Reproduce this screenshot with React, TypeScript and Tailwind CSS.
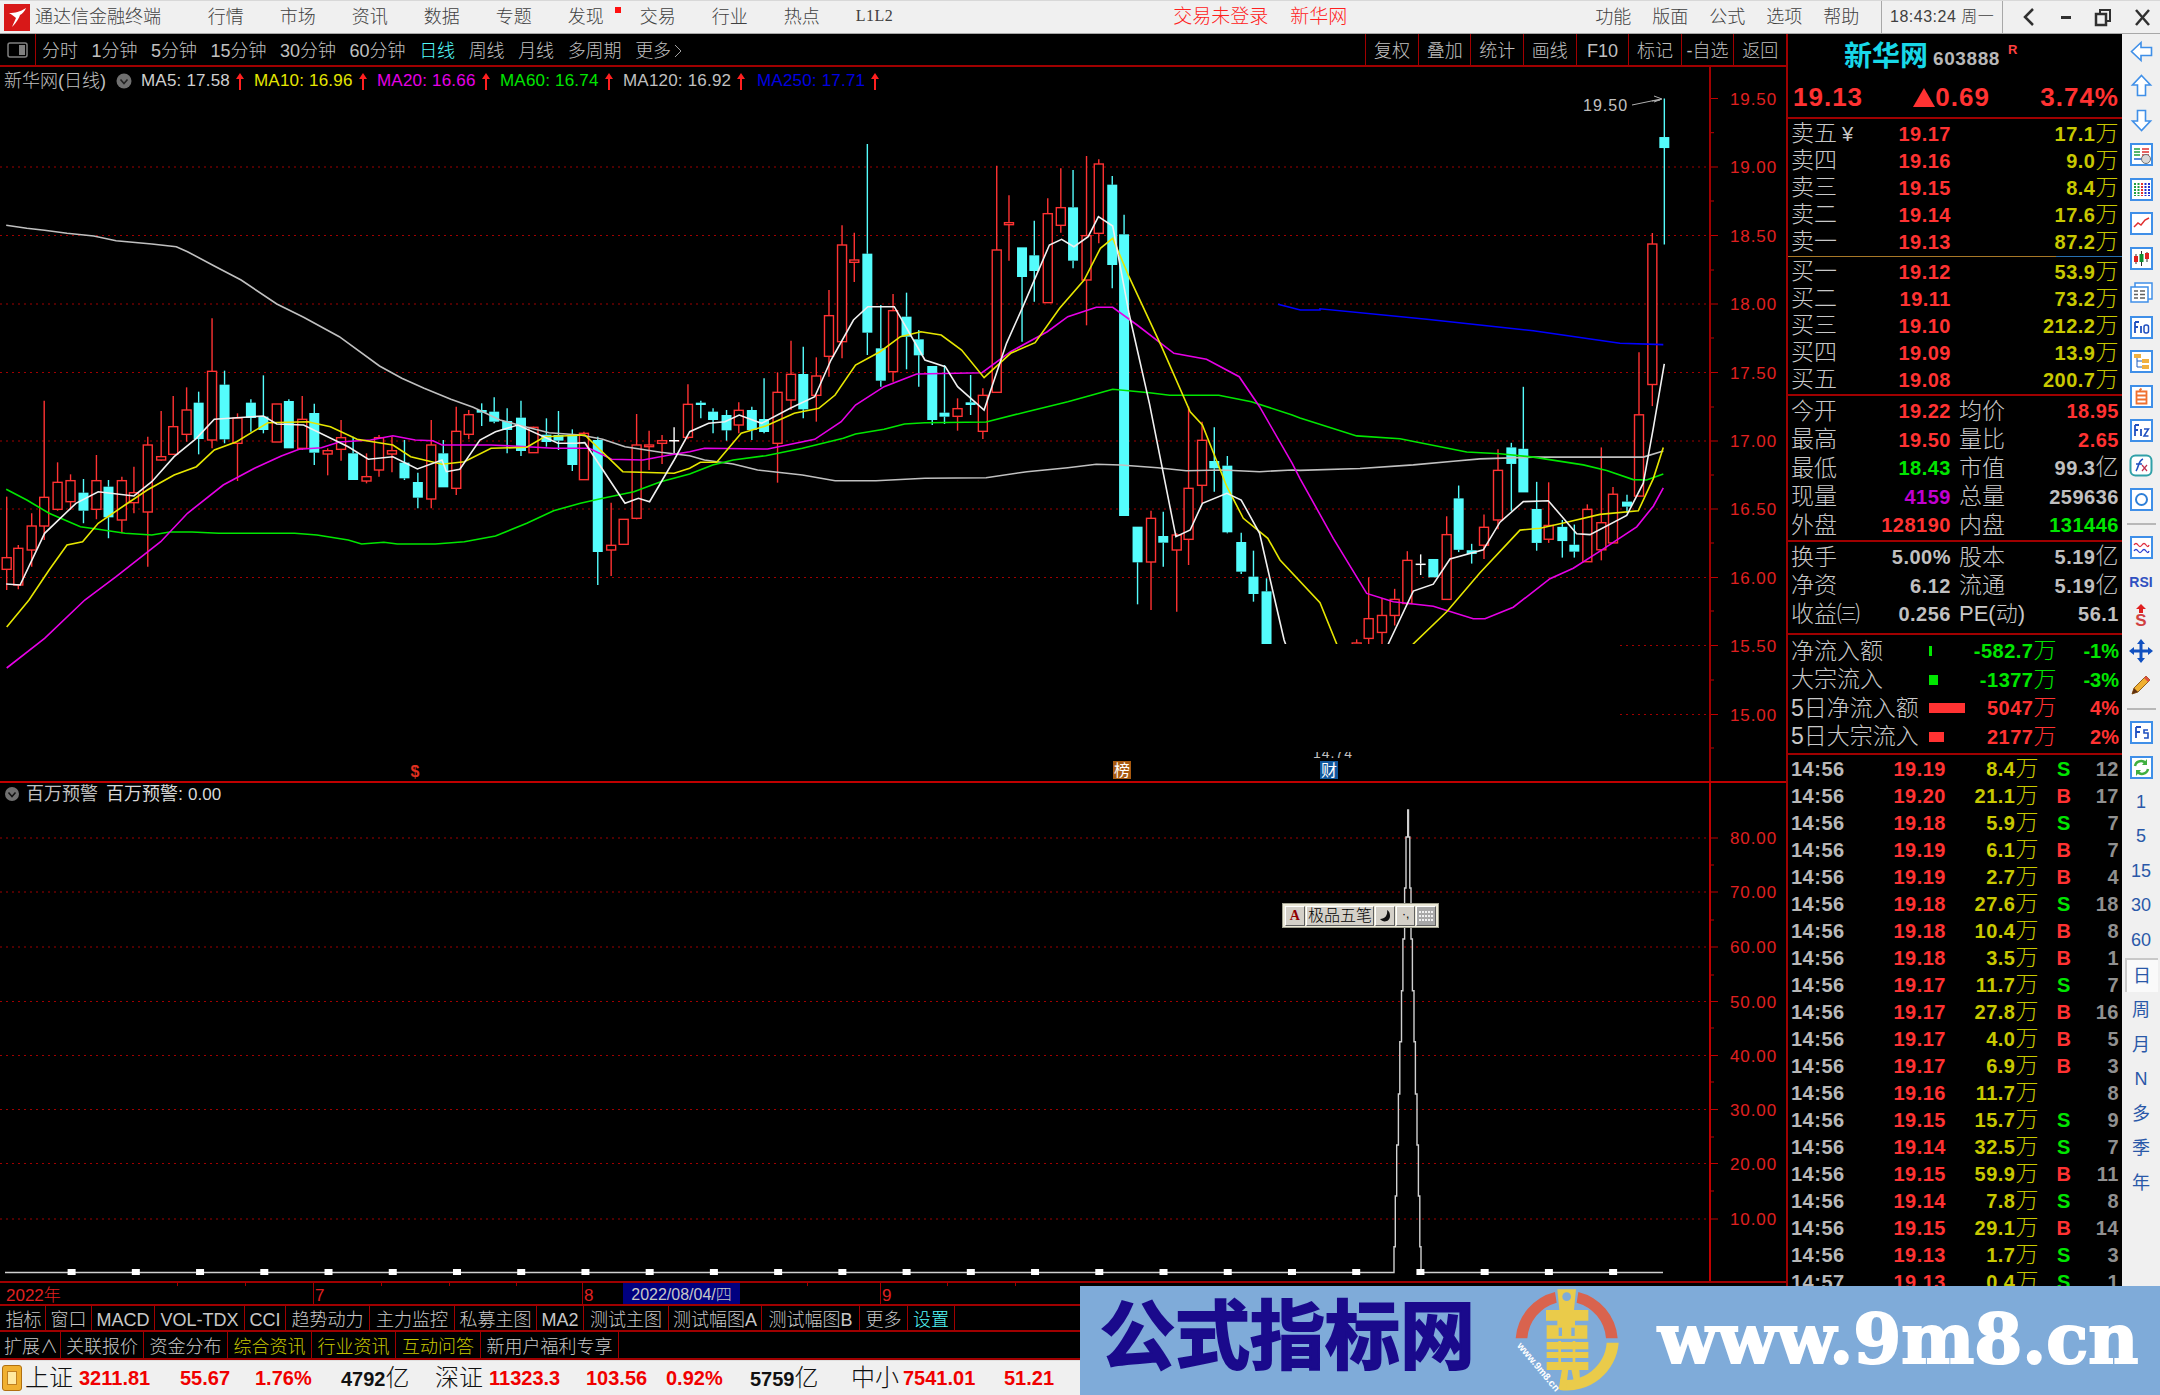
import React from "react";

type C = [number, "r" | "c" | "w", number, number, number, number];
type P = [number, number];
const z8 = (p: P): P => [p[0] / 2.24, 120 + p[1] / 3];
const z9 = (p: P): P => [680 + p[0] / 2.45, 120 + p[1] / 3];
const z10 = (p: P): P => [1300 + p[0] / 3, 70 + p[1] / 2.178];

const c8: C[] = [
  [15,"r",1130,1313,1348,1410],[41,"r",1275,1285,1395,1408],[71,"r",1180,1218,1290,1340],[99,"r",842,1132,1218,1260],
  [129,"r",1027,1087,1168,1172],[158,"r",1063,1082,1145,1170],[187,"c",1077,1118,1172,1210],[216,"r",1005,1082,1168,1198],
  [243,"c",1080,1100,1192,1255],[273,"r",1070,1082,1200,1240],[300,"r",1040,1118,1148,1180],[331,"r",950,975,1176,1340],
  [361,"r",873,1010,1020,1022],[388,"r",828,920,1003,1005],[418,"r",802,870,943,965],[445,"c",815,848,957,1003],
  [475,"r",595,754,960,985],[503,"c",752,794,958,970],[532,"r",880,894,970,1083],[562,"c",838,848,894,935],
  [590,"c",766,890,930,940],[620,"r",852,852,966,966],[647,"c",838,843,985,985],[677,"r",828,898,985,990],
  [704,"c",851,879,998,1035],[734,"r",985,992,1002,1066],[764,"r",900,953,988,1022],[791,"c",950,1000,1080,1080],
  [821,"r",1000,1070,1083,1090],[849,"r",945,953,1050,1070],[878,"r",950,992,1002,1057],[906,"c",960,1028,1075,1080],
  [936,"c",1058,1086,1133,1165],[966,"r",900,975,1137,1165],[993,"c",960,1000,1102,1102],[1022,"r",860,934,1105,1125],
  [1050,"r",870,884,943,958],[1079,"c",850,870,878,918],[1107,"c",832,875,905,910],[1136,"c",865,903,930,1000],
  [1167,"c",842,893,993,1008],[1195,"r",920,922,998,998],[1224,"c",895,944,966,980],[1251,"c",873,945,962,990],
  [1282,"c",928,944,1035,1053],[1308,"r",935,940,1079,1079],[1339,"c",950,960,1296,1395],[1369,"r",1148,1276,1290,1368],
  [1397,"r",1198,1198,1273,1273],[1426,"r",882,975,1195,1198],[1454,"r",932,975,980,1050],[1483,"r",945,962,970,1032],
  [1510,"w",922,960,962,1000],[1541,"r",793,853,952,958],
];
const c9: C[] = [
  [51,"c",842,848,855,895],[81,"c",865,875,900,940],[114,"c",870,885,931,962],[144,"r",847,871,915,940],
  [176,"c",860,870,930,960],[206,"c",775,897,936,940],[239,"r",757,817,970,1088],[272,"r",662,763,840,870],
  [302,"c",680,762,868,895],[334,"r",712,768,826,905],[365,"r",510,587,709,770],[397,"r",316,375,665,715],
  [427,"r",338,420,427,486],[459,"c",72,401,638,705],[492,"c",555,685,782,800],[522,"r",522,572,755,785],
  [555,"c",518,590,650,748],[585,"c",630,658,706,800],[618,"c",738,738,900,915],[648,"c",735,878,890,912],
  [680,"r",835,866,889,932],[712,"c",765,847,855,885],[742,"r",805,826,934,957],[776,"r",137,390,817,817],
  [806,"r",226,308,314,422],[838,"c",382,382,471,665],[868,"c",302,406,453,545],[901,"r",235,281,548,548],
  [933,"r",145,263,316,338],[963,"c",150,262,422,445],[996,"r",108,347,480,616],[1026,"r",118,132,340,370],
  [1059,"c",168,194,435,505],[1088,"c",284,343,1188,1188],[1121,"c",1220,1220,1327,1453],[1154,"r",1172,1195,1326,1470],
  [1184,"c",1175,1248,1268,1340],[1217,"r",1240,1245,1290,1475],[1246,"r",860,1105,1258,1335],[1279,"r",905,961,1096,1150],
  [1309,"c",922,1023,1045,1115],[1341,"c",1008,1037,1237,1240],[1375,"c",1238,1266,1355,1362],[1405,"c",1292,1370,1422,1445],
  [1437,"c",1375,1414,1700,1700],
];
const c10: C[] = [
  [170,"r",1240,1248,1300,1300],[206,"r",1105,1195,1238,1300],[246,"r",1150,1188,1225,1300],[284,"r",1130,1153,1188,1210],
  [322,"r",1048,1068,1162,1162],[362,"w",1055,1075,1078,1100],[400,"c",1065,1065,1105,1105],[440,"r",972,1012,1153,1153],
  [476,"c",905,933,1045,1050],[515,"c",1032,1046,1054,1075],[552,"r",968,996,1035,1065],[594,"r",826,872,980,1000],
  [634,"c",812,822,858,960],[670,"c",690,825,920,920],[710,"c",897,956,1030,1047],[746,"r",898,992,1022,1030],
  [787,"c",980,995,1026,1062],[823,"c",990,1034,1049,1062],[862,"r",946,957,1071,1071],[904,"r",822,986,1045,1068],
  [939,"r",908,924,1030,1030],[981,"c",925,940,951,965],[1017,"r",615,751,928,928],[1057,"r",355,379,685,732],
  [1093,"c",62,146,170,380],
];

const stitch = (a: P[], b: P[], c: P[]) => [
  ...a.map(z8).filter((p) => p[0] < 690),
  ...b.map(z9).filter((p) => p[0] >= 690 && p[0] < 1300),
  ...c.map(z10).filter((p) => p[0] >= 1300),
].map((p) => p[0].toFixed(1) + "," + p[1].toFixed(1)).join(" ");

const ma120 = stitch(
  [[14,316],[60,325],[100,331],[150,340],[210,348],[260,362],[340,372],[395,380],[420,395],[480,438],[540,480],[620,552],[680,592],[760,650],[850,738],[900,775],[950,805],[1010,838],[1060,862],[1120,900],[1170,918],[1230,938],[1300,945],[1350,958],[1400,980],[1480,997],[1545,1007]],
  [[60,1020],[130,1032],[190,1050],[300,1065],[380,1082],[480,1082],[600,1075],[750,1073],[850,1055],[950,1043],[1020,1033],[1080,1035],[1170,1043],[1240,1052],[1330,1050],[1420,1055],[1500,1050],[1568,1047]],
  [[0,872],[180,868],[340,860],[460,852],[540,847],[700,843],[1030,843],[1090,830]]
);
const ma60 = stitch(
  [[14,1108],[60,1140],[110,1180],[180,1220],[220,1228],[280,1240],[340,1245],[380,1236],[430,1236],[490,1240],[660,1240],[710,1245],[780,1260],[810,1272],[860,1267],[890,1272],[975,1272],[1040,1265],[1110,1248],[1180,1210],[1240,1172],[1300,1150],[1350,1135],[1420,1115],[1480,1085],[1545,1062]],
  [[80,1035],[130,1020],[210,1007],[300,985],[400,955],[430,942],[500,928],[550,912],[600,908],[750,906],[850,875],[950,845],[1010,825],[1060,808],[1150,818],[1200,826],[1320,826],[1400,845],[1500,885],[1568,912]],
  [[0,758],[170,797],[300,803],[500,832],[600,836],[700,843],[850,860],[920,872],[1000,892],[1040,893],[1090,880]]
);
const ma20 = stitch(
  [[15,1644],[100,1555],[190,1440],[260,1370],[360,1265],[420,1180],[500,1095],[570,1045],[630,1008],[670,988],[720,983],[760,966],[830,960],[880,947],[930,960],[970,962],[990,975],[1100,975],[1180,980],[1240,985],[1320,985],[1370,1018],[1440,1020],[1500,1005],[1545,995]],
  [[60,985],[215,987],[330,958],[395,905],[430,855],[500,800],[580,762],[740,758],[810,695],[900,635],[950,590],[1020,562],[1060,562],[1120,615],[1210,700],[1290,718],[1370,770],[1420,860],[1500,1030],[1568,1170]],
  [[0,890],[100,1020],[200,1140],[280,1158],[400,1168],[520,1195],[555,1195],[640,1170],[750,1108],[820,1085],[900,1048],[1010,995],[1060,950],[1090,910]]
);
const ma10 = stitch(
  [[15,1521],[65,1440],[110,1350],[150,1275],[185,1265],[220,1210],[280,1155],[330,1110],[390,1065],[440,1040],[480,990],[530,965],[600,908],[690,905],[740,920],[800,958],[880,975],[920,1010],[990,1033],[1040,1025],[1100,985],[1180,982],[1220,950],[1310,945],[1395,1055],[1510,1060],[1545,1045]],
  [[50,1027],[90,1027],[150,940],[210,918],[280,880],[340,865],[380,825],[430,735],[490,695],[540,650],[590,635],[640,645],[690,690],[745,773],[810,700],[870,668],[930,565],[990,480],[1030,385],[1060,355],[1100,470],[1180,680],[1250,875],[1280,915],[1340,1100],[1380,1195],[1440,1255],[1470,1320],[1530,1410],[1568,1470]],
  [[60,1160],[110,1250],[125,1330],[320,1330],[340,1250],[440,1180],[540,1095],[660,1002],[720,998],[800,985],[900,968],[1015,960],[1060,890],[1090,822]]
);
const ma5 = stitch(
  [[14,1392],[45,1395],[100,1240],[170,1150],[220,1115],[300,1128],[340,1085],[390,1010],[440,955],[480,898],[590,888],[620,912],[680,915],[780,980],[825,1018],[880,1010],[935,1047],[990,1020],[1000,1055],[1030,1048],[1075,960],[1110,935],[1160,915],[1250,970],[1290,970],[1310,968],[1400,1150],[1430,1135],[1455,1145],[1510,1020],[1545,935]],
  [[20,940],[70,910],[110,905],[145,885],[200,910],[270,865],[330,830],[370,720],[425,600],[460,560],[525,560],[600,720],[650,740],[680,800],[745,870],[800,670],[840,560],[905,375],[935,358],[965,380],[1000,350],[1025,290],[1060,318],[1100,580],[1150,850],[1215,1250],[1250,1230],[1280,1150],[1340,1120],[1375,1140],[1420,1240],[1450,1400],[1480,1560]],
  [[30,1400],[250,1300],[265,1250],[340,1135],[400,1120],[450,1065],[550,1045],[600,985],[670,940],[745,938],[830,1010],[870,1012],[980,970],[1030,900],[1060,780],[1093,640]]
);
const ma250 = [...([[1465,553],[1520,570],[1568,570]] as P[]).map(z9), ...([[60,520],[380,543],[700,568],[960,595],[1090,598]] as P[]).map(z10)]
  .map((p) => p[0].toFixed(1) + "," + p[1].toFixed(1)).join(" ");

const RED = "#ff3232";
const CYAN = "#54fcfc";

function Candle({ c, f }: { c: C; f: (p: P) => P }) {
  const [x, wt] = f([c[0], c[2]]);
  const bt = f([c[0], c[3]])[1];
  const bb = f([c[0], c[4]])[1];
  const wb = f([c[0], c[5]])[1];
  const col = c[1] === "r" ? RED : c[1] === "c" ? CYAN : "#ffffff";
  return (
    <g>
      <line x1={x} x2={x} y1={wt} y2={bt} stroke={col} strokeWidth={1.4} />
      <line x1={x} x2={x} y1={bb} y2={wb} stroke={col} strokeWidth={1.4} />
      {c[1] === "r" ? (
        <rect x={x - 4.5} y={bt} width={9} height={Math.max(bb - bt, 1)} fill="#000" stroke={col} strokeWidth={1.4} />
      ) : (
        <rect x={x - 5} y={bt} width={10} height={Math.max(bb - bt, 1.5)} fill={col} />
      )}
    </g>
  );
}

const gridMain = [167, 235.5, 304, 372.5, 441, 509, 577.5];

function MainChart() {
  return (
    <svg className="block w-[1709px] h-[686px]" viewBox="0 95 1709 686" fill="none">
      <defs>
        <clipPath id="upper">
          <rect x="0" y="95" width="1709" height="549" />
          <rect x="0" y="640" width="110" height="60" />
        </clipPath>
        <clipPath id="mark"><rect x="1270" y="752" width="120" height="12" /></clipPath>
      </defs>
      {gridMain.map((y) => (
        <line key={y} x1="0" x2="1709" y1={y} y2={y} stroke="#a00000" strokeDasharray="2 4" />
      ))}
      <line x1="1620" x2="1709" y1="645.5" y2="645.5" stroke="#a00000" strokeDasharray="2 4" />
      <line x1="1620" x2="1709" y1="714.5" y2="714.5" stroke="#a00000" strokeDasharray="2 4" />
      <g clipPath="url(#upper)">
        {c8.map((c) => <Candle key={"a" + c[0]} c={c} f={z8} />)}
        {c9.map((c) => <Candle key={"b" + c[0]} c={c} f={z9} />)}
        {c10.map((c) => <Candle key={"c" + c[0]} c={c} f={z10} />)}
        <polyline points={ma120} stroke="#c0c0c0" strokeWidth={1.6} />
        <polyline points={ma60} stroke="#00e600" strokeWidth={1.6} />
        <polyline points={ma20} stroke="#e600e6" strokeWidth={1.6} />
        <polyline points={ma250} stroke="#0000ff" strokeWidth={1.6} />
        <polyline points={ma10} stroke="#e6e600" strokeWidth={1.6} />
        <polyline points={ma5} stroke="#f0f0f0" strokeWidth={1.6} />
      </g>
      <text x="1583" y="111" fill="#c0c0c0" fontSize="16" letterSpacing="1">19.50</text>
      <path d="M1632 105 L1661 99 M1654 96 L1662 99 L1654 102 M1652 101 L1660 100" stroke="#b0b0b0" />
      <path d="M1669 76 L1676 82 L1669 88 L1662 82 Z" stroke="#909090" />
      <rect x="1688" y="76" width="17" height="12" rx="2" stroke="#808080" strokeWidth="1.5" />
      <rect x="1698" y="78" width="5" height="8" fill="#808080" />
      <text x="415" y="777" textAnchor="middle" fill="#e03020" fontSize="16" fontWeight="700">$</text>
      <rect x="1113" y="761" width="18" height="18" fill="#a85a10" />
      <text x="1122" y="776" textAnchor="middle" fill="#fff" fontSize="16">榜</text>
      <rect x="1320" y="761" width="18" height="18" fill="#10569c" />
      <text x="1329" y="776" textAnchor="middle" fill="#fff" fontSize="16">财</text>
      <g clipPath="url(#mark)">
        <text x="1313" y="758" fill="#c0c0c0" fontSize="14" letterSpacing="1">14.74</text>
      </g>
    </svg>
  );
}

function Axis({ top, h, majors, minors, labels }: { top: number; h: number; majors: number[]; minors: number[]; labels: string[] }) {
  return (
    <svg className="block w-[73px]" style={{ height: h }} viewBox={`1713 ${top} 73 ${h}`} fill="none">
      {majors.map((y) => <line key={y} x1="1713" x2="1720" y1={y} y2={y} stroke="#c00000" />)}
      {minors.map((y) => <line key={y} x1="1713" x2="1716" y1={y} y2={y} stroke="#c00000" />)}
      {majors.map((y, i) => (
        <text key={y} x="1779" y={y + 6} textAnchor="end" fill="#e02020" fontSize="17" letterSpacing="0.9">{labels[i]}</text>
      ))}
    </svg>
  );
}

function LowerChart() {
  const grid = [838, 892, 947, 1001.5, 1055.5, 1109.5, 1163.5, 1219];
  const squares = Array.from({ length: 25 }, (_, i) => 71.6 + 64.23 * i).filter((x) => x < 1660);
  const spike = "5,1272.5 1394,1272.5 1394,1246.7 1395.3,1246.7 1395.3,1196 1396.7,1196 1396.7,1145 1398.4,1145 1398.4,1094 1399.8,1094 1399.8,1041.7 1401.5,1041.7 1401.5,990.7 1402.9,990.7 1402.9,939 1404.6,939 1404.6,888 1406,888 1406,837 1407.7,837 1407.7,810 1408.5,810 1408.5,837 1409.8,837 1409.8,888 1411,888 1411,939 1412.4,939 1412.4,990.7 1414,990.7 1414,1041.7 1415.4,1041.7 1415.4,1094 1417,1094 1417,1145 1418.4,1145 1418.4,1196 1419.8,1196 1419.8,1246.7 1421,1246.7 1421,1272.5 1663,1272.5";
  return (
    <svg className="block w-[1709px] h-[498px]" viewBox="0 783 1709 498" fill="none">
      {grid.map((y) => <line key={y} x1="0" x2="1709" y1={y} y2={y} stroke="#a00000" strokeDasharray="2 4" />)}
      <polyline points={spike} stroke="#d0d0d0" strokeWidth={1.4} />
      {squares.map((x) => <rect key={x} x={x - 4} y={1269} width={8} height={6} fill="#ffffff" />)}
      <circle cx="12" cy="794" r="7" fill="#707070" />
      <path d="M8.5 792.5 L12 796.5 L15.5 792.5" stroke="#111" strokeWidth="1.5" />
      <text x="26" y="800" fill="#c0c0c0" fontSize="18">百万预警</text>
      <text x="106" y="800" fill="#d8d8d8" fontSize="18">百万预警: <tspan fontSize="17">0.00</tspan></text>
    </svg>
  );
}

const toolbarLeft = ["分时", "1分钟", "5分钟", "15分钟", "30分钟", "60分钟"];
const toolbarRight = ["复权", "叠加", "统计", "画线", "F10", "标记", "-自选", "返回"];
const mas: [string, string, string][] = [
  ["MA5: 17.58", "#d0d0d0", "w-[113px]"],
  ["MA10: 16.96", "#e6e600", "w-[123px]"],
  ["MA20: 16.66", "#e600e6", "w-[123px]"],
  ["MA60: 16.74", "#00e600", "w-[123px]"],
  ["MA120: 16.92", "#c0c0c0", "w-[134px]"],
  ["MA250: 17.71", "#0000e0", "w-[130px]"],
];

function UpArrow() {
  return (
    <svg width="10" height="17" viewBox="0 0 10 17" className="shrink-0">
      <path d="M5 0 L9 6 L6 6 L6 17 L4 17 L4 6 L1 6 Z" fill="#ff2020" />
    </svg>
  );
}

const tabs1: [string, number, string][] = [
  ["指标", 44, "#c8c8c8"], ["窗口", 46, "#c8c8c8"], ["MACD", 63, "#c8c8c8"], ["VOL-TDX", 90, "#c8c8c8"], ["CCI", 41, "#c8c8c8"],
  ["趋势动力", 84, "#c8c8c8"], ["主力监控", 85, "#c8c8c8"], ["私募主图", 82, "#c8c8c8"], ["MA2", 47, "#c8c8c8"], ["测试主图", 85, "#c8c8c8"],
  ["测试幅图A", 93, "#c8c8c8"], ["测试幅图B", 98, "#c8c8c8"], ["更多", 48, "#c8c8c8"], ["设置", 47, "#54fcfc"],
];
const tabs2: [string, number, string][] = [
  ["扩展∧", 59, "#c8c8c8"], ["关联报价", 83, "#c8c8c8"], ["资金分布", 84, "#c8c8c8"], ["综合资讯", 84, "#c8c800"],
  ["行业资讯", 84, "#c8c800"], ["互动问答", 85, "#c8c800"], ["新用户福利专享", 138, "#c8c8c8"],
];

function TabRow({ items, className }: { items: [string, number, string][]; className: string }) {
  return (
    <div className={"flex pl-[2px] bg-black border-b-2 border-[#a00000] " + className}>
      {items.map(([t, w, col]) => (
        <div key={t} className="flex items-center justify-center pt-[5px] border-r border-[#a00000] text-[18px] font-light whitespace-nowrap" style={{ width: w, color: col }}>
          {t}
        </div>
      ))}
    </div>
  );
}

const Wan = ({ t = "万" }: { t?: string }) => <span className="font-light text-[23px] leading-none">{t}</span>;

const asks: [string, string, string][] = [
  ["卖五", "19.17", "17.1"], ["卖四", "19.16", "9.0"], ["卖三", "19.15", "8.4"], ["卖二", "19.14", "17.6"], ["卖一", "19.13", "87.2"],
];
const bids: [string, string, string][] = [
  ["买一", "19.12", "53.9"], ["买二", "19.11", "73.2"], ["买三", "19.10", "212.2"], ["买四", "19.09", "13.9"], ["买五", "19.08", "200.7"],
];
const TX = "#c0c0c0", RD = "#ff3232", GR = "#00e600";

function QuoteRow({ r, tag }: { r: [string, string, string]; tag?: boolean }) {
  return (
    <div className="flex items-center h-[27px]">
      <div className="w-[160px] flex items-center justify-between">
        <span className="text-[23px] font-light text-[#c8c8c8] leading-none">
          {r[0]}
          {tag && <span className="ml-[5px] text-[20px]">¥</span>}
        </span>
        <span className="text-[20px] font-bold tracking-[0.5px] text-[#ff3232]">{r[1]}</span>
      </div>
      <div className="flex-1 text-right text-[20px] font-bold tracking-[0.5px] text-[#c8c800] whitespace-nowrap">
        {r[2]}
        <Wan />
      </div>
    </div>
  );
}

const stats1: [string, string, string, string, string, string][] = [
  ["今开", "19.22", RD, "均价", "18.95", RD],
  ["最高", "19.50", RD, "量比", "2.65", RD],
  ["最低", "18.43", GR, "市值", "99.3亿", TX],
  ["现量", "4159", "#c000d0", "总量", "259636", TX],
  ["外盘", "128190", RD, "内盘", "131446", GR],
];
const stats2: [string, string, string, string, string, string][] = [
  ["换手", "5.00%", TX, "股本", "5.19亿", TX],
  ["净资", "6.12", TX, "流通", "5.19亿", TX],
  ["收益㈢", "0.256", TX, "PE(动)", "56.1", TX],
];

function StatRow({ r }: { r: [string, string, string, string, string, string] }) {
  const val = (v: string) => v.endsWith("亿") ? <>{v.slice(0, -1)}<Wan t="亿" /></> : v;
  return (
    <div className="flex items-center h-[28.5px]">
      <div className="w-[160px] flex items-center justify-between">
        <span className="text-[23px] font-light text-[#c8c8c8] leading-none whitespace-nowrap">{r[0]}</span>
        <span className="text-[20px] font-bold tracking-[0.5px]" style={{ color: r[2] }}>{r[1]}</span>
      </div>
      <div className="ml-[8px] flex-1 flex items-center justify-between">
        <span className={"font-light text-[#c8c8c8] leading-none whitespace-nowrap " + (r[3].startsWith("PE") ? "text-[22px]" : "text-[23px]")}>{r[3]}</span>
        <span className="text-[20px] font-bold tracking-[0.5px]" style={{ color: r[5] }}>{val(r[4])}</span>
      </div>
    </div>
  );
}

const flows: [string, number, string, string, string][] = [
  ["净流入额", 3, "-582.7", "-1%", GR],
  ["大宗流入", 9, "-1377", "-3%", GR],
  ["5日净流入额", 36, "5047", "4%", RD],
  ["5日大宗流入", 15, "2177", "2%", RD],
];

const ticks: [string, string, string, string, string][] = [
  ["14:56","19.19","8.4","S","12"],["14:56","19.20","21.1","B","17"],["14:56","19.18","5.9","S","7"],["14:56","19.19","6.1","B","7"],
  ["14:56","19.19","2.7","B","4"],["14:56","19.18","27.6","S","18"],["14:56","19.18","10.4","B","8"],["14:56","19.18","3.5","B","1"],
  ["14:56","19.17","11.7","S","7"],["14:56","19.17","27.8","B","16"],["14:56","19.17","4.0","B","5"],["14:56","19.17","6.9","B","3"],
  ["14:56","19.16","11.7","","8"],["14:56","19.15","15.7","S","9"],["14:56","19.14","32.5","S","7"],["14:56","19.15","59.9","B","11"],
  ["14:56","19.14","7.8","S","8"],["14:56","19.15","29.1","B","14"],["14:56","19.13","1.7","S","3"],["14:57","19.13","0.4","S","1"],
];

function RightPanel() {
  return (
    <div className="w-[336px] h-[1326px] border-l-2 border-[#a00000] bg-black pl-[3px] pr-[3px] overflow-hidden">
      <div className="h-[85px] -mx-[3px] border-b-2 border-[#a00000] px-[3px]">
        <div className="h-[42px] flex items-center pl-[53px] pt-[3px]">
          <span className="text-[28px] font-bold leading-none text-[#18d8e8]">新华网</span>
          <span className="ml-[5px] text-[19px] font-bold tracking-[0.6px] text-[#b8b8b8] mt-[5px]">603888</span>
          <span className="ml-[8px] text-[13px] font-bold text-[#ff4040] -mt-[14px]">R</span>
        </div>
        <div className="h-[41px] flex items-center justify-between text-[#ff3232] text-[26px] font-bold tracking-[1px] whitespace-nowrap pt-[1px]">
          <span className="ml-[2px]">19.13</span>
          <span className="flex items-center">
            <svg width="22" height="19" viewBox="0 0 22 19"><path d="M11 0 L22 19 L0 19 Z" fill="#ff3232" /></svg>
            <span>0.69</span>
          </span>
          <span>3.74%</span>
        </div>
      </div>
      <div className="h-[136px] pt-px">
        {asks.map((r, i) => <QuoteRow key={r[0]} r={r} tag={i === 0} />)}
      </div>
      <div className="h-[3px] -mx-[3px] flex items-center">
        <div className="w-[268px] h-[1.5px] bg-[#a87828]" />
        <div className="flex-1 h-[1.5px] bg-[#2870b0]" />
      </div>
      <div className="h-[138px] border-b-2 border-[#a00000] -mx-[3px] px-[3px]">
        {bids.map((r) => <QuoteRow key={r[0]} r={r} />)}
      </div>
      <div className="h-[146px] border-b-2 border-[#a00000] -mx-[3px] px-[3px] pt-px">
        {stats1.map((r) => <StatRow key={r[0]} r={r} />)}
      </div>
      <div className="h-[93px] border-b-2 border-[#a00000] -mx-[3px] px-[3px] pt-px">
        {stats2.map((r) => <StatRow key={r[0]} r={r} />)}
      </div>
      <div className="h-[120px] border-b-2 border-[#a00000] -mx-[3px] px-[3px] pt-[2px]">
        {flows.map((f) => (
          <div key={f[0]} className="flex items-center h-[28.5px]" style={{ color: f[4] }}>
            <span className="w-[138px] text-[23px] font-light text-[#c8c8c8] leading-none whitespace-nowrap">{f[0]}</span>
            <div className="w-[40px]">
              <div className="h-[10px]" style={{ width: f[1], backgroundColor: f[4] }} />
            </div>
            <span className="w-[88px] text-right text-[20px] font-bold tracking-[0.5px] whitespace-nowrap">{f[2]}<Wan /></span>
            <span className="flex-1 text-right text-[20px] font-bold whitespace-nowrap">{f[3]}</span>
          </div>
        ))}
      </div>
      <div>
        {ticks.map((t, i) => (
          <div key={i} className="flex items-center h-[27px] text-[20px] font-bold tracking-[0.5px] whitespace-nowrap">
            <span className="w-[60px] text-[#b8b8b8]">{t[0]}</span>
            <span className="w-[95px] text-right text-[#ff3232]">{t[1]}</span>
            <span className="w-[93px] text-right text-[#c8c800]">{t[2]}<Wan /></span>
            <span className="w-[50px] text-center" style={{ color: t[3] === "S" ? GR : RD }}>{t[3]}</span>
            <span className="flex-1 text-right text-[#909090]">{t[4]}</span>
          </div>
        ))}
      </div>
    </div>
  );
}

const BL = "#3f8fe8";
const Box = ({ children }: { children?: React.ReactNode }) => (
  <svg width="23" height="23" viewBox="0 0 23 23">
    <rect x="1" y="1" width="21" height="21" fill="#fff" stroke={BL} strokeWidth="2" />
    {children}
  </svg>
);
const Arrow = ({ rot }: { rot: number }) => (
  <svg width="23" height="23" viewBox="0 0 23 23">
    <path d="M1.5 11.5 L11 2.5 L11 7.5 L21.5 7.5 L21.5 15.5 L11 15.5 L11 20.5 Z" fill="#fff" stroke={BL} strokeWidth="1.6" transform={`rotate(${rot} 11.5 11.5)`} />
  </svg>
);
const Num = ({ t }: { t: string }) => <span className="text-[18px] text-[#2a58a8] leading-none">{t}</span>;

const sideItems: React.ReactNode[] = [
  <Arrow rot={0} />, <Arrow rot={90} />, <Arrow rot={270} />,
  <Box><path d="M4 6h6M4 9h6M4 12h6" stroke="#20a040" strokeWidth="1.5"/><path d="M12 6h7M12 9h7M12 12h7" stroke="#e03030" strokeWidth="1.5"/><path d="M4 16h7" stroke="#2060d0" strokeWidth="1.5"/><circle cx="16" cy="16" r="4.5" fill="#d8d8d8" stroke="#707070"/></Box>,
  <Box><path d="M5 5v13M8.500 5v13" stroke="#20a040" strokeWidth="2" strokeDasharray="2 1"/><path d="M12 5v13" stroke="#e03030" strokeWidth="2" strokeDasharray="2 1"/><path d="M15.500 5v13M19 5v13" stroke="#2030d0" strokeWidth="2" strokeDasharray="2 1"/></Box>,
  <Box><path d="M4 15 L8 11 L11 13 L15 8 L19 6" stroke="#e03030" strokeWidth="1.5" fill="none"/></Box>,
  <Box><path d="M6 7v10M11.500 4v15M17 5v10" stroke="#303030"/><rect x="4" y="9" width="4" height="6" fill="#e02020"/><rect x="9.500" y="7" width="4" height="8" fill="#109030"/><rect x="15" y="6" width="4" height="6" fill="#e02020"/></Box>,
  <svg width="25" height="23" viewBox="0 0 25 23"><rect x="6" y="2" width="17" height="16" fill="#fff" stroke={BL} strokeWidth="1.5"/><rect x="2" y="6" width="17" height="15" fill="#fff" stroke={BL} strokeWidth="1.5"/><path d="M5 10h4M5 13.500h4M5 17h4M11 10h5M11 13.500h5M11 17h5" stroke="#606060" strokeWidth="1.5"/></svg>,
  <Box><path d="M5 6v11M5 6h4M5 11h3" stroke="#2050c0" strokeWidth="1.8" fill="none"/><path d="M11 10v7" stroke="#2050c0" strokeWidth="1.8"/><rect x="14" y="9" width="4.500" height="8" rx="2" fill="none" stroke="#2050c0" strokeWidth="1.5"/></Box>,
  <Box><rect x="4" y="4" width="7" height="4" fill="#f0b040"/><rect x="12" y="9" width="7" height="4" fill="#f0b040"/><rect x="12" y="15" width="7" height="4" fill="#f0b040"/><path d="M7 8v9h5M7 11h5" stroke="#2060c0" fill="none"/></Box>,
  <Box><path d="M11.500 3.500l-2 2M6.500 6.500h10v12h-10zM6.500 10.500h10M6.500 14.500h10" stroke="#f07030" strokeWidth="1.8" fill="none"/></Box>,
  <Box><path d="M5 6v11M5 6h4M5 11h3" stroke="#2050c0" strokeWidth="1.8" fill="none"/><path d="M11 10v7" stroke="#2050c0" strokeWidth="1.8"/><path d="M14 10h4.500l-4.500 7h4.500" stroke="#2050c0" strokeWidth="1.5" fill="none"/></Box>,
  <svg width="24" height="23" viewBox="0 0 24 23"><rect x="1.500" y="1.500" width="21" height="20" rx="5" fill="#fff" stroke="#30a0a8" strokeWidth="2"/><path d="M7 17 C10 13 9 7 14 5 M7 10h6" stroke="#2050c0" strokeWidth="1.6" fill="none"/><path d="M13 11l5 6M18 11l-5 6" stroke="#c03050" strokeWidth="1.2"/></svg>,
  <Box><circle cx="11.500" cy="11.500" r="5.500" fill="none" stroke="#2f80d8" strokeWidth="2"/></Box>,
  "sep",
  <Box><path d="M4 9 q2-3 4 0 t4 0 t4 0 t3 0" stroke="#e03040" strokeWidth="1.3" fill="none"/><path d="M4 15 q2-3 4 0 t4 0 t4 0 t3 0" stroke="#3040d0" strokeWidth="1.3" fill="none"/></Box>,
  <span className="text-[14px] font-bold text-[#3050c0] leading-none">RSI</span>,
  <span className="flex flex-col items-center leading-none">
    <svg width="12" height="9" viewBox="0 0 12 9"><path d="M6 0l5 5H8v4H4V5H1z" fill="#e02020"/></svg>
    <span className="text-[17px] font-bold text-[#d04040] leading-[15px]">S</span>
  </span>,
  <svg width="24" height="24" viewBox="0 0 24 24"><path d="M12 0l4 5h-2.500v5.500H19V8l5 4-5 4v-2.500h-5.500V19H16l-4 5-4-5h2.500v-5.500H5V16l-5-4 5-4v2.500h5.500V5H8z" fill="#1050c0"/></svg>,
  <svg width="24" height="24" viewBox="0 0 24 24"><path d="M3 21l2-6L17 3l4 4L9 19z" fill="#f0b030" stroke="#906020"/><path d="M3 21l2-6 4 4z" fill="#603010"/><path d="M17 3l4 4-2 2-4-4z" fill="#e05040"/></svg>,
  "sep",
  <Box><path d="M6 6h5M6 6v11M6 11h4" stroke="#2050c0" strokeWidth="1.8" fill="none"/><path d="M18 9h-4v3h4v5h-4" stroke="#2050c0" strokeWidth="1.6" fill="none"/></Box>,
  <Box><path d="M5 10 a6 6 0 0 1 11-2 M18 13 a6 6 0 0 1-11 2" stroke="#40b040" strokeWidth="2.500" fill="none"/><path d="M17 3v6h-5z" fill="#40b040"/><path d="M6 20v-6h5z" fill="#40b040"/></Box>,
  <Num t="1" />, <Num t="5" />, <Num t="15" />, <Num t="30" />, <Num t="60" />,
  "sel",
  <Num t="周" />, <Num t="月" />, <Num t="N" />, <Num t="多" />, <Num t="季" />, <Num t="年" />,
];

function Sidebar() {
  return (
    <div className="w-[38px] h-[1326px] bg-[#f0f0f0] flex flex-col items-center">
      {sideItems.map((it, i) =>
        it === "sep" ? (
          <div key={i} className="h-[13px] w-[29px] shrink-0 flex items-center"><div className="w-full h-[2px] bg-[#b8b8b8]" /></div>
        ) : it === "sel" ? (
          <div key={i} className="h-[34px] w-[33px] shrink-0 my-[1px] flex items-center justify-center bg-[#fafafa] border-l-2 border-t-2 border-[#c8c8c8]">
            <Num t="日" />
          </div>
        ) : (
          <div key={i} className="h-[34.5px] shrink-0 flex items-center justify-center">{it}</div>
        )
      )}
    </div>
  );
}

function TitleBar() {
  const menu = ["行情", "市场", "资讯", "数据", "专题", "发现", "交易", "行业", "热点"];
  return (
    <div className="h-[34px] bg-[#f0f0f0] border-t border-[#d8d8d8] border-b border-b-[#a8a8a8] flex items-center text-[#404040] font-light whitespace-nowrap">
      <svg width="26" height="27" viewBox="0 0 26 27" className="ml-[4px] shrink-0">
        <rect width="26" height="27" fill="#d81818" />
        <path d="M22 4 C16 8 11 9 5 9 C8 11 10 12 12 14 L8 23 C13 18 15 14 16 11 C18 10 21 7 22 4 Z" fill="#fff" />
      </svg>
      <span className="ml-[5px] w-[176px] text-[18px]">通达信金融终端</span>
      <div className="flex gap-[36px] text-[18px]">
        {menu.map((m) => (
          <span key={m} className="relative w-[36px]">
            {m}
            {m === "发现" && <span className="absolute left-[47px] top-[3px] w-[6px] h-[6px] bg-[#ff1010]" />}
          </span>
        ))}
        <span className="text-[16px] tracking-[0.5px] font-normal font-['Liberation_Serif',serif]">L1L2</span>
      </div>
      <div className="ml-[280px] flex gap-[22px] text-[19px] text-[#ff2020]">
        <span>交易未登录</span>
        <span>新华网</span>
      </div>
      <div className="ml-[248px] flex gap-[21px] text-[18px]">
        {["功能", "版面", "公式", "选项", "帮助"].map((m) => <span key={m}>{m}</span>)}
      </div>
      <div className="ml-[22px] h-full w-[124px] border-x border-[#a8a8a8] flex items-center justify-center text-[16px] tracking-[0.5px]">18:43:24 周一</div>
      <svg width="157" height="24" viewBox="0 0 157 24" fill="none" stroke="#303030" className="shrink-0">
        <path d="M30 4 L22 12 L30 20" strokeWidth="2.5" />
        <path d="M58 12.500 H68" strokeWidth="3" />
        <rect x="93" y="9" width="10" height="11" strokeWidth="2.500" />
        <path d="M97 9 V5 H107 V16 H103" strokeWidth="2" />
        <path d="M133 5 L146 20 M146 5 L133 20" strokeWidth="2.500" />
      </svg>
    </div>
  );
}

function Toolbar() {
  return (
    <div className="h-[33px] bg-black border-b-2 border-[#a00000] flex items-stretch text-[18px] font-light text-[#c0c0c0] whitespace-nowrap">
      <div className="w-[36px] border-r border-[#a00000] flex items-center justify-center shrink-0">
        <svg width="21" height="16" viewBox="0 0 21 16" fill="none">
          <rect x="1" y="1" width="19" height="14" rx="2" stroke="#808080" strokeWidth="1.5" />
          <rect x="12" y="3" width="6" height="10" fill="#808080" />
        </svg>
      </div>
      <div className="flex items-center gap-[13.500px] pl-[6px] pt-[3px]">
        {toolbarLeft.map((t) => <span key={t}>{t}</span>)}
        <span className="text-[#54fcfc]">日线</span>
        <span>周线</span>
        <span>月线</span>
        <span>多周期</span>
        <span className="flex items-center">更多
          <svg width="9" height="14" viewBox="0 0 9 14" fill="none" className="ml-[3px]"><path d="M1 1 L7 7 L1 13" stroke="#a0a0a0" /></svg>
        </span>
      </div>
      <div className="ml-auto flex">
        {toolbarRight.map((t) => (
          <span key={t} className="w-[52.600px] flex items-center justify-center pt-[3px] border-l border-[#a00000]">{t}</span>
        ))}
      </div>
    </div>
  );
}

function Logo() {
  return (
    <svg width="140" height="110" viewBox="0 0 420 330" className="shrink-0">
      <path d="M47 157 A155 155 0 0 1 165 18 L170 50 A120 120 0 0 0 82 157 Z" fill="#d9634e" />
      <path d="M353 157 A155 155 0 0 0 235 18 L230 50 A120 120 0 0 1 318 157 Z" fill="#d9634e" />
      <path d="M356 170 A155 155 0 0 1 180 312 L180 280 A120 120 0 0 0 320 170 Z" fill="#eacb4a" />
      <path d="M172 10 H228 L222 72 H265 V104 H225 V118 H262 V158 H140 V118 H172 V104 H138 V72 H178 Z" fill="#eacb4a" />
      <circle cx="200" cy="32" r="13" fill="#7fabd9" />
      <rect x="140" y="168" width="125" height="22" fill="#eacb4a" />
      <rect x="140" y="198" width="125" height="18" fill="#eacb4a" />
      <rect x="140" y="228" width="125" height="24" fill="#eacb4a" />
      <rect x="175" y="165" width="8" height="65" fill="#eacb4a" />
      <rect x="218" y="165" width="8" height="65" fill="#eacb4a" />
      <path d="M186 250 H205 L198 310 H176 Z" fill="#eacb4a" />
      <path d="M214 250 H238 L240 280 L222 288 Z" fill="#eacb4a" />
      <rect x="176" y="125" width="10" height="25" fill="#7fabd9" />
      <rect x="214" y="125" width="10" height="25" fill="#7fabd9" />
      <text x="0" y="0" fill="#fff" fontSize="30" fontWeight="700" transform="translate(50 180) rotate(50)">www.9m8.cn</text>
    </svg>
  );
}

export default function App() {
  const status: [string, string, number, string?][] = [
    ["上证", "#111", 54], ["3211.81", "#f00000", 101], ["55.67", "#f00000", 75], ["1.76%", "#f00000", 86], ["4792亿", "#111", 94],
    ["深证", "#111", 54], ["11323.3", "#f00000", 97], ["103.56", "#f00000", 80], ["0.92%", "#f00000", 84], ["5759亿", "#111", 101],
    ["中小", "#111", 52], ["7541.01", "#f00000", 101], ["51.21", "#f00000", 60],
  ];
  return (
    <div className="relative w-[2160px] h-[1395px] overflow-hidden bg-black font-['Liberation_Sans','Noto_Sans_CJK_SC',sans-serif]">
      <TitleBar />
      <div className="flex h-[1326px]">
        <div className="w-[1786px] shrink-0 flex flex-col">
          <Toolbar />
          <div className="flex h-[716px] border-b-2 border-[#c00000]">
            <div className="w-[1711px] border-r-2 border-[#a00000] shrink-0">
              <div className="h-[28px] flex items-center pl-[4px] text-[17px] tracking-[0.2px] font-light whitespace-nowrap">
                <span className="w-[112px] text-[18px] tracking-[0px] text-[#c0c0c0]">新华网(日线)</span>
                <svg width="16" height="16" viewBox="0 0 16 16" className="shrink-0"><circle cx="8" cy="8" r="7.500" fill="#707070" /><path d="M4.500 6.500 L8 10.500 L11.500 6.500" stroke="#222" strokeWidth="1.600" fill="none" /></svg>
                <div className="ml-[9px] flex">
                  {mas.map(([t, col, w]) => (
                    <span key={t} className={"flex items-center gap-[5px] " + w} style={{ color: col }}>
                      {t}
                      <UpArrow />
                    </span>
                  ))}
                </div>
              </div>
              <MainChart />
            </div>
            <Axis
              top={67}
              h={714}
              majors={[98.5, 167, 235.5, 304, 372.5, 441, 509, 577.5, 645.5, 714.5]}
              minors={[132.7, 201, 270, 338, 407, 475, 543, 611, 680, 748]}
              labels={["19.50", "19.00", "18.50", "18.00", "17.50", "17.00", "16.50", "16.00", "15.50", "15.00"]}
            />
          </div>
          <div className="flex h-[500px] border-b-2 border-[#a00000]">
            <div className="w-[1711px] border-r-2 border-[#c00000] shrink-0">
              <LowerChart />
            </div>
            <Axis
              top={783}
              h={498}
              majors={[838, 892, 947, 1001.5, 1055.5, 1109.5, 1163.5, 1219]}
              minors={[865, 920, 975, 1028, 1082, 1137, 1191]}
              labels={["80.00", "70.00", "60.00", "50.00", "40.00", "30.00", "20.00", "10.00"]}
            />
          </div>
          <div className="relative h-[23px] bg-black border-b-2 border-[#a00000] text-[17px] text-[#e02020] font-light">
            {[177, 245, 381, 449, 516, 807, 947, 1015].map((x) => (
              <span key={x} className="absolute top-0 w-px h-[3px] bg-[#a00000]" style={{ left: x }} />
            ))}
            <span className="absolute left-[6px] top-0">2022年</span>
            <span className="absolute left-[313px] top-0 h-full border-l border-[#a00000] pl-[1px]">7</span>
            <span className="absolute left-[582px] top-0 h-full border-l border-[#a00000] pl-[1px]">8</span>
            <span className="absolute left-[623px] top-0 h-full w-[117px] bg-[#000080] text-[#c8c8c8] text-[16px] text-center">2022/08/04/四</span>
            <span className="absolute left-[880px] top-0 h-full border-l border-[#a00000] pl-[1px]">9</span>
          </div>
          <TabRow items={tabs1} className="h-[26px]" />
          <TabRow items={tabs2} className="h-[28px]" />
        </div>
        <RightPanel />
        <Sidebar />
      </div>
      <div className="h-[35px] bg-[#f0f0f0] flex items-center pl-[2px] whitespace-nowrap border-t border-[#e0e0e0] text-[20px] font-bold">
        <span className="w-[20px] h-[26px] mr-[3px] rounded-[3px] bg-[#f0b030] border border-[#b07010] flex items-center justify-center shrink-0">
          <span className="w-[10px] h-[14px] bg-[#ffe9a0] border border-[#c08020]" />
        </span>
        {status.map(([t, col, w], i) => (
          <span
            key={i}
            className={t.length === 2 ? "text-[24px] font-light leading-none" : ""}
            style={{ color: col, width: w }}
          >
            {t.endsWith("亿") ? <>{t.slice(0, -1)}<span className="font-light text-[24px]">亿</span></> : t}
          </span>
        ))}
      </div>
      <div className="absolute right-0 bottom-0 w-[1080px] h-[109px] bg-[#7fabd9] flex items-center">
        <span className="ml-[20px] w-[400px] shrink-0 -mt-[6px] text-[75px] leading-none font-bold text-[#1a0a8c] [-webkit-text-stroke:2px_#1a0a8c] whitespace-nowrap">公式指标网</span>
        <Logo />
        <span className="ml-[18px] -mt-[5px] text-[69px] leading-none font-bold text-white [-webkit-text-stroke:2px_#ffffff] font-['DejaVu_Serif',serif] whitespace-nowrap">www.9m8.cn</span>
      </div>
      <div className="absolute left-[1282px] top-[903px] w-[157px] h-[25px] bg-[#ece9d8] border border-[#a0a090] flex items-center gap-px px-[2px] text-black">
        <span className="w-[20px] h-[20px] bg-[#d4d0c8] border-t border-l border-white border-b border-r border-b-[#606060] border-r-[#606060] flex items-center justify-center text-[14px] font-bold text-[#900000] font-['Liberation_Serif',serif]">A</span>
        <span className="w-[70px] h-[20px] bg-[#d4d0c8] border-t border-l border-white border-b border-r border-b-[#606060] border-r-[#606060] text-[16px] leading-[18px] font-light text-center whitespace-nowrap overflow-hidden">极品五笔</span>
        <span className="w-[20px] h-[20px] bg-[#d4d0c8] border-t border-l border-white border-b border-r border-b-[#606060] border-r-[#606060] flex items-center justify-center">
          <svg width="14" height="14" viewBox="0 0 14 14"><path d="M9 1 C10 6 7 10 2 10 C5 14 12 13 12 7 C12 4 11 2 9 1 Z" fill="#111" /></svg>
        </span>
        <span className="w-[20px] h-[20px] bg-[#d4d0c8] border-t border-l border-white border-b border-r border-b-[#606060] border-r-[#606060] text-[12px] leading-[14px] text-center">·,</span>
        <span className="w-[20px] h-[20px] bg-[#a8a8a8] border-t border-l border-white border-b border-r border-b-[#606060] border-r-[#606060] flex items-center justify-center">
          <svg width="16" height="12" viewBox="0 0 16 12"><path d="M1 2h14M1 6h14M1 10h14" stroke="#f0f0f0" strokeWidth="2" strokeDasharray="2 1" /></svg>
        </span>
      </div>
    </div>
  );
}
